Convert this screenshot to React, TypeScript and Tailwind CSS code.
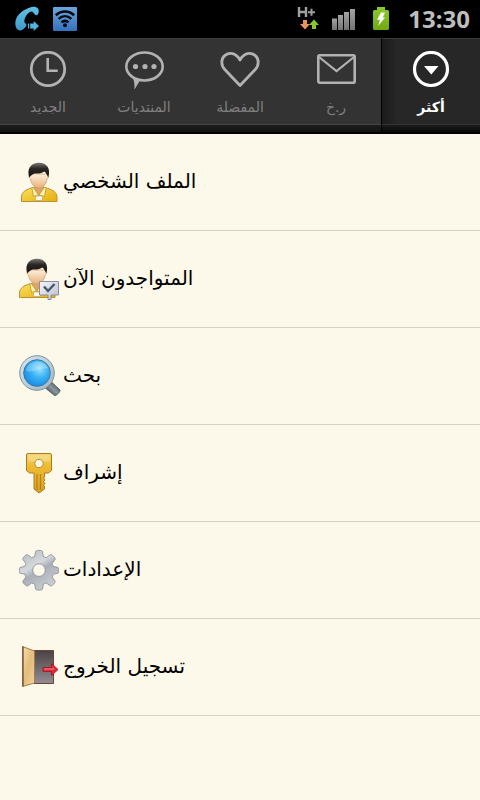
import type { ReactNode } from "react";

type Tab = { label: string; icon: ReactNode; active?: boolean };
type MenuItem = { label: string; icon: ReactNode };

const tabs: Tab[] = [
  { label: "الجديد", icon: <ClockIcon /> },
  { label: "المنتديات", icon: <ForumIcon /> },
  { label: "المفضلة", icon: <HeartIcon /> },
  { label: "ر.خ", icon: <MailIcon /> },
  { label: "أكثر", icon: <MoreIcon />, active: true },
];

const items: MenuItem[] = [
  { label: "الملف الشخصي", icon: <ProfileIcon /> },
  { label: "المتواجدون الآن", icon: <OnlineIcon /> },
  { label: "بحث", icon: <SearchIcon /> },
  { label: "إشراف", icon: <KeyIcon /> },
  { label: "الإعدادات", icon: <GearIcon /> },
  { label: "تسجيل الخروج", icon: <ExitIcon /> },
];

export default function App() {
  return (
    <div className="flex min-h-screen flex-col bg-[#fdf9ea] font-['DejaVu_Sans',sans-serif]">
      <StatusBar />
      <TabBar />
      <MenuList />
    </div>
  );
}

function StatusBar() {
  return (
    <header className="flex h-[38px] items-center justify-between bg-black pr-2.5 pl-3.5">
      <div className="flex items-center gap-3">
        <CallIcon />
        <WifiIcon />
      </div>
      <div className="flex items-center">
        <DataIcon />
        <SignalIcon />
        <BatteryIcon />
        <span className="ml-4 pl-0.5 font-['Noto_Sans',sans-serif] text-2xl font-bold text-[#bebebe]">
          13:30
        </span>
      </div>
    </header>
  );
}

function TabBar() {
  return (
    <nav className="grid h-24 grid-cols-5 border-b-2 border-black bg-[#333333]">
      {tabs.map((tab) => (
        <button
          key={tab.label}
          type="button"
          className={
            tab.active
              ? "-ml-[3px] flex flex-col border-l border-black bg-linear-to-r from-[#1b1b1b] to-[#272727] to-15% text-white"
              : "flex flex-col text-[#b2b2b2]"
          }
        >
          <span className="flex w-full flex-1 flex-col items-center gap-2 border-t border-[#3c3c3c] pt-3">
            {tab.icon}
            <span
              dir="rtl"
              className={
                tab.active
                  ? "text-sm leading-5 font-bold"
                  : "text-sm leading-5 text-[#808080]"
              }
            >
              {tab.label}
            </span>
          </span>
          <span
            className={
              tab.active
                ? "h-2 w-full border-t border-[#333333] bg-linear-to-b from-[#1c1c1c] to-[#080808]"
                : "h-2 w-full border-t border-[#464646] bg-linear-to-b from-[#1c1c1c] to-[#141414]"
            }
          />
        </button>
      ))}
    </nav>
  );
}

function MenuList() {
  return (
    <ul>
      {items.map((item) => (
        <li key={item.label} className="border-b border-[#d4d1c5]">
          <a href="#" className="flex h-24 items-center gap-1 pl-[19px]">
            {item.icon}
            <span dir="rtl" className="pb-0.5 text-xl text-black">
              {item.label}
            </span>
          </a>
        </li>
      ))}
    </ul>
  );
}

/* status bar icons */

function CallIcon() {
  return (
    <svg width="27" height="26" viewBox="0 0 27 26">
      <defs>
        <linearGradient id="call" x1="0" y1="0" x2="0" y2="1">
          <stop offset="0" stopColor="#63bfe6" />
          <stop offset="1" stopColor="#3d9bc9" />
        </linearGradient>
      </defs>
      <path
        d="M16 1.500C19 .3 22.500.8 24 2.500c1.300 1.800.9 4.800-.4 6.200-1 1-2.200.6-3-.4l-1.800-2.200c-.9-.9-2-.7-3 0-3 2-5 5-5.500 9-.1 1.200.2 1.800 1.300 2.300 1.500.7 1 2.300-.3 3.800C9.500 23.500 7 25 5 24.300 2 23.200.800 19 1.500 15 2.700 8.500 9 3.800 16 1.500z"
        fill="url(#call)"
      />
      <path d="M14 17.500h1.200v5H14zM16.200 17.500h3.500V15l5.300 5-5.300 5v-2.500h-3.500z" fill="#55b4df" />
    </svg>
  );
}

function WifiIcon() {
  return (
    <svg width="24" height="24" viewBox="0 0 24 24">
      <defs>
        <linearGradient id="wifi" x1="0" y1="0" x2="0" y2="1">
          <stop offset="0" stopColor="#6ba7dc" />
          <stop offset="1" stopColor="#3471bd" />
        </linearGradient>
      </defs>
      <rect width="24" height="24" rx="1" fill="url(#wifi)" />
      <g fill="none" stroke="#05080d" strokeWidth="2.600">
        <path d="M2.800 8.200c5.500-5 12.900-5 18.400 0" />
        <path d="M5.700 11.900c3.800-3.500 8.800-3.500 12.600 0" />
        <path d="M8.500 15.400c2.200-2 4.800-2 7 0" />
      </g>
      <circle cx="12" cy="18.300" r="2" fill="#05080d" />
    </svg>
  );
}

function DataIcon() {
  return (
    <svg width="22" height="26" viewBox="0 0 22 26">
      <path d="M2 1v10M9 1v10M2 6h7" stroke="#a0a0a0" strokeWidth="2.400" fill="none" />
      <path d="M11 6.200h7M14.500 2.700v7" stroke="#a0a0a0" strokeWidth="2" />
      <path d="M6 14h4v4h3l-5 5.500L3 18h3z" fill="#f0915a" />
      <path d="M15 23h4v-4h3l-5-5.500-5 5.500h3z" fill="#86c82a" />
    </svg>
  );
}

function SignalIcon() {
  return (
    <svg className="ml-3" width="25" height="26" viewBox="0 0 25 26">
      <defs>
        <linearGradient id="signal" x1="0" y1="0" x2="0" y2="1">
          <stop offset="0" stopColor="#a3a3a3" />
          <stop offset="1" stopColor="#747474" />
        </linearGradient>
      </defs>
      <g fill="url(#signal)">
        <rect x="1" y="12.500" width="5" height="11.500" />
        <rect x="7" y="9" width="5" height="15" />
        <rect x="13" y="6" width="5" height="18" />
        <rect x="19" y="3" width="5" height="21" />
      </g>
    </svg>
  );
}

function BatteryIcon() {
  return (
    <svg className="ml-4" width="18" height="26" viewBox="0 0 18 26">
      <defs>
        <linearGradient id="battery" x1="0" y1="0" x2="0" y2="1">
          <stop offset="0" stopColor="#8fcb2c" />
          <stop offset="1" stopColor="#6fa912" />
        </linearGradient>
      </defs>
      <path
        d="M5 1h8v3h2.500a1.500 1.500 0 0 1 1.500 1.500v17a1.500 1.500 0 0 1-1.500 1.500h-13A1.500 1.500 0 0 1 1 22.500v-17A1.500 1.500 0 0 1 2.500 4H5z"
        fill="url(#battery)"
      />
      <path d="M9 6.500h4L10.800 11.500H13L6.200 20l1.600-6.300H5z" fill="#fff" />
    </svg>
  );
}

/* tab icons, drawn in the button's text colour */

function ClockIcon() {
  return (
    <svg width="38" height="38" viewBox="0 0 38 38" fill="none" stroke="currentColor">
      <circle cx="19" cy="18" r="16.700" strokeWidth="2.800" />
      <path d="M18.700 7v12.700h10" strokeWidth="2.600" />
    </svg>
  );
}

function ForumIcon() {
  return (
    <svg width="42" height="38" viewBox="0 0 42 38">
      <ellipse cx="21.500" cy="15.500" rx="18.200" ry="14" fill="none" stroke="currentColor" strokeWidth="2.600" />
      <path d="M10 27l7 2.500-5.800 9.500c.6-3.500.3-7.500-1.200-12z" fill="currentColor" />
      <circle cx="12.500" cy="15.500" r="2.600" fill="currentColor" />
      <circle cx="22" cy="15.500" r="2.600" fill="currentColor" />
      <circle cx="31" cy="15.500" r="2.600" fill="currentColor" />
    </svg>
  );
}

function HeartIcon() {
  return (
    <svg width="42" height="38" viewBox="0 0 42 38">
      <path
        d="M21 34.500 6 18.800C1.500 14 2 7.500 6 4.300 10.500.700 17 2 21 9c4-7 10.500-8.300 15-4.700 4 3.200 4.500 9.700 0 14.500z"
        fill="none"
        stroke="currentColor"
        strokeWidth="2.800"
        strokeLinejoin="round"
      />
    </svg>
  );
}

function MailIcon() {
  return (
    <svg width="40" height="38" viewBox="0 0 40 38" fill="none" stroke="currentColor" strokeWidth="2.600">
      <rect x="2.300" y="4.300" width="36.400" height="27.400" rx="1.500" />
      <path d="m3 6 17.500 14L38 6" strokeWidth="2.200" />
    </svg>
  );
}

function MoreIcon() {
  return (
    <svg width="38" height="38" viewBox="0 0 38 38">
      <circle cx="19" cy="18" r="16.500" fill="none" stroke="currentColor" strokeWidth="3.200" />
      <path d="M12 15h14.500l-7.200 8.500z" fill="currentColor" />
    </svg>
  );
}

/* menu icons */

function Person() {
  return (
    <>
      <defs>
        <linearGradient id="shirt" x1="0" y1="0" x2="1" y2="1">
          <stop offset="0" stopColor="#f9e262" />
          <stop offset="1" stopColor="#e8ac06" />
        </linearGradient>
        <linearGradient id="skin" x1="0" y1="0" x2="0" y2="1">
          <stop offset="0" stopColor="#fdeedd" />
          <stop offset="1" stopColor="#e9b27c" />
        </linearGradient>
        <linearGradient id="hair" x1="0" y1="0" x2="0" y2="1">
          <stop offset="0" stopColor="#777" />
          <stop offset=".4" stopColor="#2a2624" />
          <stop offset="1" stopColor="#15110f" />
        </linearGradient>
      </defs>
      <path
        d="M2.500 39.500V35c0-4.500 4-7.500 11.500-9.500h12c7.500 2 12 5 12 9.500v4.500z"
        fill="url(#shirt)"
        stroke="#b9932e"
        strokeWidth="1"
      />
      <path d="M15 22h10v5l-5 7-5-7z" fill="#dfa46c" />
      <path d="m14 25 5.500 8-5 1.500-1.500-8zM25.500 25 20 33l5.500 1.500 1.500-8z" fill="#fdf5ac" stroke="#b9932e" strokeWidth=".8" />
      <rect x="16.500" y="34" width="7" height="4.500" fill="#fbf7ef" stroke="#c9a659" strokeWidth=".7" />
      <path
        d="M11 12c-1.500 0-1.800 4 .5 5 .8 5.500 4 8.800 8.300 8.800s7.500-3.300 8.200-8.800c2.300-1 2-5 .5-5z"
        fill="url(#skin)"
        stroke="#cc9866"
        strokeWidth=".7"
      />
      <path
        d="M10.500 15.500C7.500 8 11 1.300 19 .8c8.500-.5 13.300 5.700 10.200 14.700-1-2.500-2-4.500-3.700-6-3.500 2.200-7.500 2.300-9.700 2-2 .5-4 2-5.300 4z"
        fill="url(#hair)"
      />
    </>
  );
}

function ProfileIcon() {
  return (
    <svg width="40" height="40" viewBox="0 0 40 40">
      <Person />
    </svg>
  );
}

function OnlineIcon() {
  return (
    <svg width="40" height="42" viewBox="0 0 40 42">
      <defs>
        <linearGradient id="card" x1="0" y1="0" x2="1" y2="1">
          <stop offset="0" stopColor="#f4f6fa" />
          <stop offset="1" stopColor="#b7c0cf" />
        </linearGradient>
      </defs>
      <g transform="translate(-2)">
        <Person />
      </g>
      <path
        d="M20.500 23.500h19v13.500H32v4.500h-3V37h-8.500z"
        fill="url(#card)"
        stroke="#8a8f99"
        strokeWidth="1"
      />
      <path d="m25 28.500 4 4.500 6.500-7" fill="none" stroke="#4c5a70" strokeWidth="2.500" />
    </svg>
  );
}

function SearchIcon() {
  return (
    <svg width="40" height="42" viewBox="0 0 40 42" className="overflow-visible">
      <defs>
        <radialGradient id="lens" cx=".6" cy=".35" r=".75">
          <stop offset="0" stopColor="#9be2fb" />
          <stop offset=".45" stopColor="#38b2f5" />
          <stop offset="1" stopColor="#1282e0" />
        </radialGradient>
        <linearGradient id="rim" x1="0" y1="0" x2="1" y2="1">
          <stop offset="0" stopColor="#dbe7ec" />
          <stop offset="1" stopColor="#9fb4bf" />
        </linearGradient>
        <linearGradient id="handle" x1="0" y1="1" x2="1" y2="0">
          <stop offset="0" stopColor="#2e363c" />
          <stop offset=".5" stopColor="#8b969d" />
          <stop offset="1" stopColor="#3b444a" />
        </linearGradient>
      </defs>
      <path d="m27 33.500 6-6 8 7.500c1 1-4 6.500-5.500 5.500z" fill="url(#handle)" stroke="#3d464c" strokeWidth=".8" />
      <circle cx="18" cy="18" r="17.300" fill="url(#rim)" stroke="#7e929c" strokeWidth="1" />
      <circle cx="18" cy="18" r="13.300" fill="url(#lens)" stroke="#3779a5" strokeWidth="1" />
      <path d="M7 16C8 8 17 4 25 8.500c2 1.200 3.500 3 4 5C22 12 14 18 7 16z" fill="#fff" opacity=".25" />
    </svg>
  );
}

function KeyIcon() {
  return (
    <svg width="40" height="42" viewBox="0 0 40 42">
      <defs>
        <linearGradient id="gold" x1="0" y1="0" x2="0" y2="1">
          <stop offset="0" stopColor="#f4d673" />
          <stop offset=".3" stopColor="#eebd32" />
          <stop offset="1" stopColor="#d9a01e" />
        </linearGradient>
      </defs>
      <path
        d="M9 1.500h22a1.500 1.500 0 0 1 1.500 1.500v15.500l-3 2.500h-4v4l-1 1 1.500 2-1.500 1.500 1.500 2-1.500 1.500 1 1.500v2.500L20 41l-5-4V21h-4.500l-3-2.500V3A1.500 1.500 0 0 1 9 1.500z"
        fill="url(#gold)"
        stroke="#a97c20"
        strokeWidth="1"
      />
      <path d="M9.500 3.500h21v6h-21z" fill="#fff" opacity=".22" />
      <path d="M18 22v16M21.500 22v16" stroke="#a97718" strokeWidth="1.200" opacity=".8" />
      <circle cx="20" cy="11.500" r="4.200" fill="#fdf9ea" stroke="#b68b30" strokeWidth="1" />
    </svg>
  );
}

function GearIcon() {
  return (
    <svg width="40" height="42" viewBox="0 0 40 42">
      <defs>
        <linearGradient id="steel" x1="0" y1="0" x2=".6" y2="1">
          <stop offset="0" stopColor="#b3b7bd" />
          <stop offset=".45" stopColor="#d5d8dd" />
          <stop offset=".6" stopColor="#a9aeb7" />
          <stop offset="1" stopColor="#c9cdd3" />
        </linearGradient>
      </defs>
      <path
        fillRule="evenodd"
        d="M16.500 2.500c0-1.500 7-1.500 7 0l.8 5 3 1.200 4-3c1.300-.9 5.700 3.500 4.800 4.800l-3 4 1.200 3 4.500.8c1.300.2 1.300 5.700 0 6l-4.500.8-1.200 3 3 4c.9 1.300-3.500 5.700-4.800 4.800l-4-3-3 1.200-.8 5c0 1.300-7 1.300-7 0l-.8-5-3-1.200-4 3c-1.300.9-5.700-3.500-4.800-4.800l3-4-1.200-3-4.500-.8c-1.300-.3-1.300-5.800 0-6l4.500-.8 1.200-3-3-4c-.9-1.300 3.500-5.700 4.800-4.800l4 3 3-1.200zM20 14.800a6.300 6.300 0 1 0 0 12.600 6.300 6.300 0 0 0 0-12.600z"
        fill="url(#steel)"
        stroke="#8d929a"
        strokeWidth=".9"
      />
    </svg>
  );
}

function ExitIcon() {
  return (
    <svg width="40" height="42" viewBox="0 0 40 42">
      <defs>
        <linearGradient id="dark" x1="0" y1="0" x2="0" y2="1">
          <stop offset="0" stopColor="#4a4345" />
          <stop offset="1" stopColor="#918d92" />
        </linearGradient>
        <linearGradient id="wood" x1="0" y1="0" x2="1" y2="1">
          <stop offset="0" stopColor="#f7dfae" />
          <stop offset=".5" stopColor="#e2bd7c" />
          <stop offset="1" stopColor="#f1d49b" />
        </linearGradient>
      </defs>
      <path d="M15 4.500h19.500v33H15z" fill="url(#dark)" stroke="#6d4434" strokeWidth="1" />
      <path d="M3.500.5 15.500 5v32L3.500 40.500z" fill="url(#wood)" stroke="#a37c4c" strokeWidth="1" />
      <path d="M4 .5v40" stroke="#7d5a3a" strokeWidth="1.500" />
      <path
        d="M24 21.500h8.500v-4l6.500 6-6.500 6v-4H24z"
        fill="#dd2b3a"
        stroke="#a81422"
        strokeWidth=".9"
      />
      <path d="M25 23h10" stroke="#f5858d" strokeWidth="1" />
    </svg>
  );
}
